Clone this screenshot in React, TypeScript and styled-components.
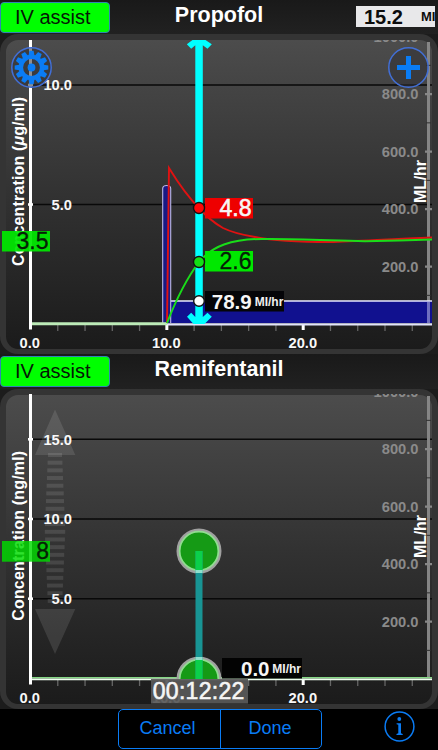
import React from "react";
import styled, { createGlobalStyle } from "styled-components";

const BLUE = "#0a7cf5";
const SANS = '"Liberation Sans", Arial, sans-serif';

const GlobalStyle = createGlobalStyle`
  * { box-sizing: border-box; }
  body { margin: 0; background: #1c1c1c; font-family: ${SANS}; }
`;

const Screen = styled.main`
  display: flex;
  flex-direction: column;
  width: 438px;
  height: 750px;
  overflow: hidden;
  background: #1c1c1c;
`;

const Header = styled.header<{ $height: number }>`
  display: grid;
  grid-template-columns: 110px 1fr 110px;
  height: ${(p) => p.$height}px;
  padding-top: 2px;
  background: linear-gradient(#191919, #212121);
`;

const AssistButton = styled.button`
  width: 110px;
  height: 31px;
  padding: 0 0 0 14px;
  text-align: left;
  border: 1.5px solid #2f84b4;
  border-radius: 4px;
  background: #00ff00;
  color: #061806;
  font: 20px/27px ${SANS};
`;

const Title = styled.h1`
  margin: 0;
  color: #fff;
  font: bold 21.5px/27px ${SANS};
  text-align: center;
`;

const VolumeReadout = styled.div`
  display: flex;
  align-items: baseline;
  justify-content: space-between;
  align-self: start;
  justify-self: end;
  width: 79px;
  height: 21px;
  margin: 3.5px 3px 0 0;
  padding-left: 8px;
  overflow: hidden;
  background: #e8e8ea;
  color: #0c0c0c;
  font: bold 20px/23px ${SANS};
`;

const VolumeUnit = styled.span`
  width: 14px;
  font-size: 13px;
  line-height: 14px;
  position: relative;
  top: -3px;
`;

const Panel = styled.section`
  position: relative;
  flex: none;
  height: 320px;
  border: 6px solid #343434;
  border-bottom-width: 5px;
  border-radius: 18px;
  background: linear-gradient(#4c4c4c, #323232 50%, #1b1b1b);
`;

const Chart = styled.svg`
  display: block;
  width: 426px;
  height: 309px;
  overflow: visible;
`;

const RoundButton = styled.button<{ $side: "left" | "right" }>`
  position: absolute;
  top: 6.5px;
  ${(p) => (p.$side === "left" ? "left: 4.5px;" : "right: 3px;")}
  width: 41px;
  height: 41px;
  padding: 0;
  border: 0;
  background: none;
`;

const Scale = styled.text<{ $dim?: boolean }>`
  font: bold 14.7px ${SANS};
  fill: ${(p) => (p.$dim ? "#8a8a8a" : "#f8f8f8")};
`;

const AxisTitle = styled.text`
  font: bold 16px ${SANS};
  fill: #fff;
`;

const Value = styled.text<{ $dark?: boolean }>`
  font: 23px ${SANS};
  fill: ${(p) => (p.$dark ? "#062006" : "#f6f6f6")};
  stroke: ${(p) => (p.$dark ? "#062006" : "#f6f6f6")};
  stroke-width: ${(p) => (p.$dark ? 0.3 : 0.6)}px;
`;

const Rate = styled.text`
  font: bold 20.5px ${SANS};
  fill: #f6f6f6;
`;

const Unit = styled.text`
  font: bold 12px ${SANS};
  fill: #f0f0f0;
`;

const Footer = styled.footer`
  display: grid;
  grid-template-columns: 118px 204px 1fr;
  height: 41px;
  background: #000;
`;

const Segmented = styled.div`
  grid-column: 2;
  display: grid;
  grid-template-columns: 1fr 1fr;
  height: 40px;
  border: 1.5px solid ${BLUE};
  border-radius: 5px;
`;

const Segment = styled.button`
  padding: 0 4px 2px 0;
  border: 0;
  background: none;
  color: ${BLUE};
  font: 18px ${SANS};
  & + & { border-left: 1px solid ${BLUE}; padding-right: 2px; }
`;

const InfoButton = styled.button`
  width: 31px;
  height: 31px;
  margin: 2px 0 0 62px;
  padding: 0;
  border: 0;
  background: none;
`;

/** Vertical and horizontal axes. `base` is the y of the zero line. */
function Axes({ top, base, grid, id }: { top: number; base: number; grid: [number, string][]; id: string }) {
  const rates = [200, 400, 600, 800, 1000];
  const rateY = (v: number) => base + 0.1 - (v / 200) * 57.5;
  return (
    <g>
      <clipPath id={id}>
        <rect x="6" y={top} width="426" height="309" rx="10" />
      </clipPath>
      {grid.map(([y]) => (
        <path key={y} d={`M30 ${y}H432`} stroke="#090909" strokeWidth="1.6" />
      ))}
      <path d={`M428.5 ${top + 2}V${base - 1}`} stroke="#858585" strokeWidth="3" />
      {[0, 1, 2, 3, 4].map((i) => (
        <path key={i} d={`M426 ${rateY(100 + i * 200)}h5`} stroke="#303030" strokeWidth="1" />
      ))}
      <g clipPath={`url(#${id})`}>
        {rates.map((v) => (
          <g key={v}>
            {v < 1000 && <path d={`M425 ${rateY(v)}h7`} stroke="#888" strokeWidth="2.4" />}
            <Scale $dim x="418.5" y={rateY(v) + 5.2} textAnchor="end">{v.toFixed(1)}</Scale>
          </g>
        ))}
      </g>
      {Array.from({ length: 14 }, (_, i) => i + 1).map((i) => (
        <path
          key={i}
          d={`M${30.5 + i * 27.27} ${base}v${i % 5 ? 7 : 6}`}
          stroke={i % 5 ? "#666" : "#fff"}
          strokeWidth={i % 5 ? 1.3 : 3}
        />
      ))}
      {[0, 10, 20].map((v, i) => (
        <Scale key={v} x={29.8 + i * 136.5} y={base + 24.3} textAnchor="middle">{v.toFixed(1)}</Scale>
      ))}
    </g>
  );
}

function LeftAxis({ top, base, grid }: { top: number; base: number; grid: [number, string][] }) {
  return (
    <g>
      <path d={`M30.5 ${top}V${base + 5.5}`} stroke="#fff" strokeWidth="3" />
      {grid.map(([y, label]) => (
        <g key={y}>
          <path d={`M28 ${y}h5`} stroke="#fff" strokeWidth="2.6" />
          <Scale x="72" y={y + 5.2} textAnchor="end">{label}</Scale>
        </g>
      ))}
    </g>
  );
}

function Ring() {
  return <circle r="19.7" fill="#323236" fillOpacity=".55" stroke="#426fd6" strokeWidth="1.5" />;
}

function Gear() {
  return (
    <svg width="41" height="41" viewBox="-20.5 -20.5 41 41">
      <Ring />
      <g fill={BLUE}>
        {Array.from({ length: 12 }, (_, i) => (
          <path key={i} d="M-3.1 -11L-2.1 -16.8H2.1L3.1 -11Z" transform={`rotate(${i * 30})`} />
        ))}
        <circle r="3.9" />
      </g>
      <circle r="10.6" fill="none" stroke={BLUE} strokeWidth="4.4" />
    </svg>
  );
}

function Plus() {
  return (
    <svg width="41" height="41" viewBox="-20.5 -20.5 41 41">
      <Ring />
      <path d="M0 -11.5V11.5M-11.5 0H11.5" stroke={BLUE} strokeWidth="5" />
    </svg>
  );
}

function Handle({ y }: { y: number }) {
  return (
    <g>
      <circle cx="199" cy={y} r="20.8" fill="#159a15" stroke="#a0a0a0" strokeWidth="3.4" />
      <circle cx="199" cy={y} r="19.4" fill="none" stroke="#91dc91" strokeWidth="1.8" />
    </g>
  );
}

const propofolGrid: [number, string][] = [[85, "10.0"], [204.5, "5.0"]];
const remiGrid: [number, string][] = [[439.3, "15.0"], [519, "10.0"], [598.7, "5.0"]];

function PropofolChart() {
  return (
    <Chart viewBox="6 40 426 309">
      <Axes id="clip-propofol" top={40} base={324} grid={propofolGrid} />
      <AxisTitle transform="translate(23.5 266) rotate(-90)" textLength="169">
        Concentration (<tspan fontStyle="italic">μ</tspan>g/ml)
      </AxisTitle>
      <rect x="167" y="301" width="265" height="22" fill="#11118f" />
      <path d="M428.5 302V323" stroke="#6f6fc0" strokeWidth="3" />
      <path d="M167 301H432" stroke="#e8e8ff" strokeWidth="1.5" />
      <path d="M162.7 323V188.5Q162.7 185.5 166.7 185.5Q170.7 185.5 170.7 188.5V323" fill="#191985" stroke="#bcb6e6" strokeWidth="1.1" />
      <path d="M32 323.8H167" stroke="#bdebb8" strokeWidth="3" />
      <path d="M167 324.3H432" stroke="#e2e4fa" strokeWidth="2.2" />
      <LeftAxis top={40} base={324} grid={propofolGrid} />
      <path
        d="M192.5 40H205.5L211.8 44.3L207.5 48.8L202.8 45.2V317L207.5 312.8L211.8 316.8L204.5 324H193.5L187 316.8L191.2 312.8L195.3 317V45.2L191.2 48.8L186.8 44.3Z"
        fill="#00ffff"
      />
      <path d="M167 323L169 168C177 181 187 196 199 208C207 217 214 223 223 228C233 233 243 235 255 237C270 240 290 242 330 242C355 241.5 390 239 432 237.5" fill="none" stroke="#e01212" strokeWidth="1.9" />
      <path d="M167 323C176 300 187 278 199 262C206 254 214 248 224 244.5C237 240 248 239 262 239C290 238.5 320 240 365 241.2Q400 240.5 432 239.5" fill="none" stroke="#19dd19" strokeWidth="2" />
      <rect x="205" y="198" width="48" height="20.5" fill="#ee0000" />
      <rect x="205" y="251" width="48" height="20.5" fill="#00e800" />
      <rect x="205" y="291" width="79" height="20.5" fill="#050508" />
      <g stroke="#111" strokeWidth="1.4">
        <circle cx="199" cy="208" r="5.5" fill="#ff0505" />
        <circle cx="199" cy="262" r="5.5" fill="#13e013" />
        <circle cx="199" cy="301" r="5.3" fill="#fff" />
      </g>
      <Value x="219.5" y="216">4.8</Value>
      <Value $dark x="219.5" y="269.3">2.6</Value>
      <Rate x="211.8" y="308.5">78.9</Rate>
      <Unit x="254.7" y="305.5">MI/hr</Unit>
      <AxisTitle transform="translate(425.5 203) rotate(-90)" textLength="43">ML/hr</AxisTitle>
      <rect x="2" y="231" width="48" height="20.5" fill="#00e800" fillOpacity=".93" />
      <Value $dark x="16.5" y="249">3.5</Value>
    </Chart>
  );
}

function RemifentanilChart() {
  return (
    <Chart viewBox="6 395 426 309">
      <Axes id="clip-remifentanil" top={394} base={679} grid={remiGrid} />
      <g fill="#fff" fillOpacity=".11">
        <path d="M55 409.5L75.3 455H35ZM35 609H75.3L55 654Z" />
        {Array.from({ length: 20 }, (_, i) => {
          const half = 10.3 - Math.abs(i - 9.8) * 0.33;
          return <rect key={i} x={55 - half} y={455 + i * 7.68 - 2} width={half * 2} height="4" />;
        })}
      </g>
      <AxisTitle transform="translate(23.5 620.8) rotate(-90)" textLength="170">Concentration (ng/ml)</AxisTitle>
      <AxisTitle transform="translate(425.5 558) rotate(-90)" textLength="43">ML/hr</AxisTitle>
      <path d="M32 677.8H432" stroke="#85d885" strokeWidth="1.6" />
      <path d="M32 679.3H432" stroke="#effff0" strokeWidth="1.7" />
      <LeftAxis top={394} base={679} grid={remiGrid} />
      <clipPath id="above-zero"><rect x="170" y="500" width="60" height="179" /></clipPath>
      <g clipPath="url(#above-zero)">
        <Handle y={551} />
        <Handle y={679} />
        <path d="M199 551V679" stroke="#189494" strokeWidth="7" />
        <path d="M199 551V570M199 660V679" stroke="#0bd04b" strokeWidth="7" />
        <path d="M195.5 571.5h7M195.5 658.5h7" stroke="#8fe0cd" strokeWidth="3" />
      </g>
      <rect x="222" y="658" width="80" height="20.5" fill="#030303" />
      <Rate x="241" y="675.8">0.0</Rate>
      <Unit x="272.3" y="673">MI/hr</Unit>
      <rect x="151" y="679" width="97" height="24.5" fill="#585858" fillOpacity=".93" />
      <Value x="152.8" y="699.2" textLength="91.5">00:12:22</Value>
      <rect x="2" y="541" width="48" height="20.7" fill="#00dc00" fillOpacity=".82" />
      <Value $dark x="36.2" y="558.8">8</Value>
    </Chart>
  );
}

export default function App() {
  return (
    <Screen>
      <GlobalStyle />
      <Header $height={34}>
        <AssistButton>IV assist</AssistButton>
        <Title>Propofol</Title>
        <VolumeReadout>
          15.2 <VolumeUnit>MI</VolumeUnit>
        </VolumeReadout>
      </Header>
      <Panel>
        <PropofolChart />
        <RoundButton $side="left" aria-label="Settings"><Gear /></RoundButton>
        <RoundButton $side="right" aria-label="Add"><Plus /></RoundButton>
      </Panel>
      <Header $height={35}>
        <AssistButton>IV assist</AssistButton>
        <Title>Remifentanil</Title>
      </Header>
      <Panel>
        <RemifentanilChart />
      </Panel>
      <Footer>
        <Segmented>
          <Segment>Cancel</Segment>
          <Segment>Done</Segment>
        </Segmented>
        <InfoButton aria-label="Information">
          <svg width="31" height="31" viewBox="0 0 31 31" fill={BLUE}>
            <circle cx="15.5" cy="15.5" r="14.4" fill="none" stroke={BLUE} strokeWidth="1.5" />
            <circle cx="15.3" cy="8" r="1.9" />
            <path d="M12.6 12.2H17V22.3L18.7 23V24H12.5V23L14.3 22.3V13.8L12.6 13.2Z" />
          </svg>
        </InfoButton>
      </Footer>
    </Screen>
  );
}
